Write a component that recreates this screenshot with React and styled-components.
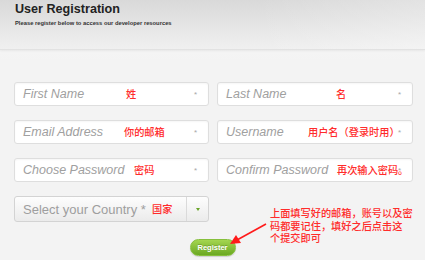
import React from "react";
import styled, { createGlobalStyle } from "styled-components";

const GlobalStyle = createGlobalStyle`
  body {
    margin: 0;
    background: #f4f4f4;
    font-family: "Liberation Sans", Arial, sans-serif;
  }
`;

const Page = styled.div`
  position: relative;
  width: 425px;
  height: 260px;
  overflow: hidden;
  background: linear-gradient(#fbfbfb, #f3f3f3 60px, #f3f3f3);
`;

const Header = styled.header`
  height: 47px;
  padding: 2px 15px 0;
  background: linear-gradient(90deg, rgba(255, 255, 255, 0) 60%, rgba(255, 255, 255, 0.25)),
    linear-gradient(#d9d9d9, #f0f0f0);
  border-bottom: 1px solid #e2e2e2;
  box-shadow: 0 1px 2px rgba(0, 0, 0, 0.06);
`;

const Title = styled.h1`
  margin: 0;
  font-size: 12.6px;
  line-height: 14px;
  font-weight: bold;
  color: #222;
`;

const Subtitle = styled.p`
  margin: 3px 0 0;
  font-size: 5.8px;
  line-height: 8px;
  font-weight: bold;
  color: #333;
`;

const Form = styled.form`
  display: grid;
  grid-template-columns: 195px 196px;
  column-gap: 8px;
  row-gap: 14px;
  padding: 32px 12px 0 14px;
`;

const Field = styled.div`
  position: relative;
  display: flex;
  align-items: center;
  height: 24px;
  box-sizing: border-box;
  padding: 0 11px 0 8px;
  background: #fff;
  border: 1px solid #dedede;
  border-radius: 3px;
  box-shadow: inset 0 1px 2px rgba(0, 0, 0, 0.04);
`;

const Placeholder = styled.span`
  font-size: 12.5px;
  font-style: italic;
  color: #a0a0a0;
`;

const Star = styled.span`
  margin-left: auto;
  font-size: 8px;
  color: #a8a8a8;
`;

const Note = styled.span`
  position: absolute;
  top: 50%;
  left: ${(p) => p.$left}px;
  transform: translateY(-52%);
  font-family: "Noto Sans CJK SC", sans-serif;
  font-size: 10.2px;
  line-height: 12px;
  font-weight: 500;
  color: #ff2b2b;
  white-space: nowrap;
`;

const Select = styled.div`
  position: relative;
  display: flex;
  align-items: stretch;
  height: 26px;
  box-sizing: border-box;
  background: linear-gradient(#fdfdfd, #ebebeb);
  border: 1px solid #d3d3d3;
  border-radius: 3px;
`;

const SelectLabel = styled.span`
  flex: 1;
  display: flex;
  align-items: center;
  padding-left: 8px;
  font-size: 13px;
  color: #9e9e9e;
`;

const Caret = styled.span`
  width: 21px;
  display: flex;
  align-items: center;
  justify-content: center;
  border-left: 1px solid #dadada;

  &::after {
    content: "";
    border-left: 2.5px solid transparent;
    border-right: 2.5px solid transparent;
    border-top: 3px solid #6aa52a;
  }
`;

const Actions = styled.div`
  display: flex;
  justify-content: center;
  padding-top: 17px;
`;

const RegisterButton = styled.button`
  width: 46px;
  height: 17px;
  padding: 0;
  border: 1px solid #86bf3c;
  border-radius: 9px;
  background: linear-gradient(#a4d650, #6ba822);
  box-shadow: 0 1px 1px rgba(0, 0, 0, 0.15);
  color: #fff;
  font-family: "Liberation Sans", Arial, sans-serif;
  font-size: 7.5px;
  font-weight: bold;
  text-shadow: 0 -1px 0 rgba(0, 0, 0, 0.2);
`;

const Callout = styled.p`
  position: absolute;
  left: 270px;
  top: 207px;
  margin: 0;
  font-family: "Noto Sans CJK SC", sans-serif;
  font-size: 10.2px;
  line-height: 12.6px;
  font-weight: 500;
  color: #ff2b2b;
  white-space: nowrap;
`;

const Arrow = styled.svg`
  position: absolute;
  left: 225px;
  top: 218px;
`;

const fields = [
  { label: "First Name", note: "姓", left: 111 },
  { label: "Last Name", note: "名", left: 118 },
  { label: "Email Address", note: "你的邮箱", left: 109 },
  { label: "Username", note: "用户名（登录时用）", left: 90 },
  { label: "Choose Password", note: "密码", left: 119 },
  { label: "Confirm Password", note: "再次输入密码。", left: 119 },
];

export default function App() {
  return (
    <Page>
      <GlobalStyle />
      <Header>
        <Title>User Registration</Title>
        <Subtitle>Please register below to access our developer resources</Subtitle>
      </Header>

      <Form onSubmit={(e) => e.preventDefault()}>
        {fields.map((f) => (
          <Field key={f.label}>
            <Placeholder>{f.label}</Placeholder>
            <Note $left={f.left}>{f.note}</Note>
            <Star>*</Star>
          </Field>
        ))}
        <Select>
          <SelectLabel>Select your Country *</SelectLabel>
          <Note $left={137}>国家</Note>
          <Caret />
        </Select>
      </Form>

      <Actions>
        <RegisterButton type="button">Register</RegisterButton>
      </Actions>

      <Callout>
        上面填写好的邮箱，账号以及密
        <br />
        码都要记住，填好之后点击这
        <br />
        个提交即可
      </Callout>

      <Arrow width="45" height="30" viewBox="0 0 45 30">
        <line x1="41" y1="6" x2="12" y2="22" stroke="#ff1a1a" strokeWidth="1.6" />
        <polygon points="5,26 11,17 16,25" fill="#ff1a1a" />
      </Arrow>
    </Page>
  );
}
